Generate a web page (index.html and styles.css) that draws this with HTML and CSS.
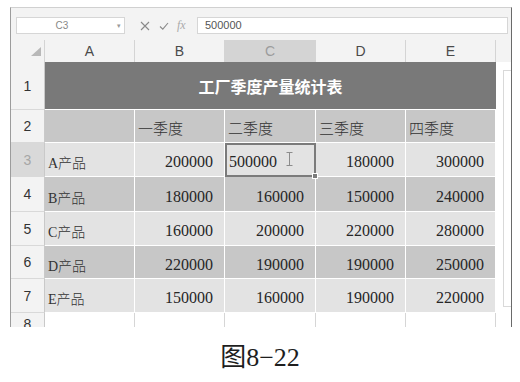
FILE: index.html
```html
<!DOCTYPE html>
<html lang="zh">
<head>
<meta charset="utf-8">
<link rel="stylesheet" href="styles.css">
</head>
<body>
<div class="window">
  <div class="fbar">
    <div class="namebox"><span class="ref">C3</span><span class="dd">▾</span></div>
    <div class="icons">
      <svg class="ico" width="12" height="12" viewBox="0 0 12 12"><path d="M2 2L10 10M10 2L2 10" stroke="#8a8a8a" stroke-width="1.1" fill="none"/></svg>
      <svg class="ico" width="12" height="12" viewBox="0 0 12 12"><path d="M2 6.5L4.8 9.2L10 3" stroke="#8a8a8a" stroke-width="1.1" fill="none"/></svg>
      <span class="fx">fx</span>
    </div>
    <div class="finput">500000</div>
  </div>
  <div class="sheet">
    <div class="corner"><svg width="10" height="9" viewBox="0 0 10 9"><path d="M10 0V9H0Z" fill="#b8b8b8"/></svg></div>
    <div class="ch">A</div>
    <div class="ch">B</div>
    <div class="ch sel">C</div>
    <div class="ch">D</div>
    <div class="ch">E</div>
    <div class="ch end"></div>

    <div class="scroll"><div class="track"></div></div>

    <div class="rh">1</div>
    <div class="title">工厂季度产量统计表</div>

    <div class="rh">2</div>
    <div class="c l dk"></div>
    <div class="c l q dk">一季度</div>
    <div class="c l q dk">二季度</div>
    <div class="c l q dk">三季度</div>
    <div class="c l q dk">四季度</div>

    <div class="rh sel">3</div>
    <div class="c l lt">A产品</div>
    <div class="c n lt">200000</div>
    <div class="c lt active">500000<svg class="ibeam" width="7" height="14" viewBox="0 0 7 14"><path d="M0.5 0.5H6.5M3.5 0.5V13.5M0.5 13.5H6.5" stroke="#8c8c8c" stroke-width="1" fill="none"/></svg></div>
    <div class="c n lt">180000</div>
    <div class="c n lt">300000</div>

    <div class="rh">4</div>
    <div class="c l dk">B产品</div>
    <div class="c n dk">180000</div>
    <div class="c n dk">160000</div>
    <div class="c n dk">150000</div>
    <div class="c n dk">240000</div>

    <div class="rh">5</div>
    <div class="c l lt">C产品</div>
    <div class="c n lt">160000</div>
    <div class="c n lt">200000</div>
    <div class="c n lt">220000</div>
    <div class="c n lt">280000</div>

    <div class="rh">6</div>
    <div class="c l dk">D产品</div>
    <div class="c n dk">220000</div>
    <div class="c n dk">190000</div>
    <div class="c n dk">190000</div>
    <div class="c n dk">250000</div>

    <div class="rh">7</div>
    <div class="c l lt">E产品</div>
    <div class="c n lt">150000</div>
    <div class="c n lt">160000</div>
    <div class="c n lt">190000</div>
    <div class="c n lt">220000</div>

    <div class="rh last">8</div>
    <div class="e"></div>
    <div class="e"></div>
    <div class="e"></div>
    <div class="e"></div>
    <div class="e"></div>
  </div>
</div>
<div class="caption">图8−22</div>
</body>
</html>
```

FILE: styles.css
```css
body {
  margin: 0;
  background: #fff;
  font-family: "Liberation Sans", "Noto Sans CJK SC", sans-serif;
}

.window {
  margin: 7px 0 0 10px;
  width: 502px;
  height: 320px;
  box-sizing: border-box;
  border-left: 1px solid #9c9c9c;
  border-top: 1px solid #d0d0d0;
  border-right: 1px solid #6a6a6a;
  background: #f3f3f3;
  overflow: hidden;
}

.fbar {
  height: 32px;
  box-sizing: border-box;
  padding-top: 9px;
  display: flex;
  align-items: flex-start;
}

.namebox {
  margin-left: 5px;
  width: 109px;
  height: 17px;
  box-sizing: border-box;
  border: 1px solid #d6d6d6;
  background: #fff;
  display: flex;
  align-items: center;
}

.ref {
  flex: 1;
  text-align: center;
  padding-right: 8px;
  font-size: 10px;
  color: #888;
}

.dd {
  width: 8px;
  margin-right: 1px;
  font-size: 7px;
  color: #9a9a9a;
  text-align: center;
}

.icons {
  width: 72px;
  height: 17px;
  box-sizing: border-box;
  padding-left: 14px;
  display: flex;
  align-items: center;
  gap: 7px;
}

.ico {
  display: block;
}

.fx {
  width: 12px;
  font-family: "Liberation Serif", serif;
  font-style: italic;
  font-size: 12px;
  color: #aaa;
}

.finput {
  width: 311px;
  height: 17px;
  box-sizing: border-box;
  border: 1px solid #d6d6d6;
  background: #fff;
  padding-left: 7px;
  font-size: 11px;
  line-height: 15px;
  color: #555;
}

.sheet {
  display: grid;
  grid-template-columns: 34px 90px 90px 91px 90px 90px 15px;
  grid-template-rows: 22px 48px 33px 34px 35px 34px 33px 34px 20px;
}

.corner {
  background: #f3f3f3;
  border-right: 1px solid #d4d4d4;
  display: flex;
  align-items: flex-end;
  justify-content: flex-end;
  padding: 0 3px 6px 0;
}

.ch {
  box-sizing: border-box;
  background: #f3f3f3;
  border-right: 1px solid #d4d4d4;
  display: flex;
  align-items: center;
  justify-content: center;
  font-size: 14px;
  color: #4a4a4a;
}

.ch.sel {
  background: #d4d4d4;
  color: #9c9c9c;
}

.ch.end {
  border-right: none;
}

.scroll {
  grid-column: 7;
  grid-row: 2 / 10;
  background: #fff;
}

.track {
  margin: 8px 0 0 7px;
  height: 235px;
  border: 1px solid #d9d9d9;
  border-right: none;
}

.rh {
  box-sizing: border-box;
  background: #f3f3f3;
  border-right: 1px solid #c9c9c9;
  border-bottom: 1px solid #d9d9d9;
  display: flex;
  align-items: center;
  justify-content: center;
  font-size: 14px;
  color: #333;
}

.rh.sel {
  background: #d9d9d9;
  color: #a6a6a6;
}

.rh.last {
  align-items: flex-start;
  padding-top: 3px;
}

.title {
  grid-column: span 5;
  box-sizing: border-box;
  background: #797979;
  border-bottom: 1px solid #fff;
  display: flex;
  align-items: center;
  justify-content: center;
  font-family: "Noto Sans CJK SC", sans-serif;
  font-weight: bold;
  font-size: 16px;
  color: #fff;
}

.c {
  box-sizing: border-box;
  border-right: 1px solid #fff;
  border-bottom: 1px solid #fff;
  display: flex;
  align-items: center;
  padding-top: 5px;
  font-family: "Liberation Serif", "Noto Sans CJK SC", serif;
  color: #262626;
}

.n {
  justify-content: flex-end;
  padding-right: 11px;
  font-size: 16px;
}

.l {
  padding-left: 3px;
  font-size: 14px;
  font-weight: 300;
  color: #333;
}

.l.q {
  font-size: 15px;
  padding-top: 3px;
}

.dk {
  background: #c7c7c7;
}

.lt {
  background: #e3e3e3;
}

.active {
  position: relative;
  border: 2px solid #7b7b7b;
  padding-left: 2px;
  padding-top: 3px;
  font-size: 16px;
}

.active::after {
  content: "";
  position: absolute;
  right: -4px;
  bottom: -4px;
  width: 4px;
  height: 4px;
  background: #7b7b7b;
  border: 1px solid #fff;
}

.ibeam {
  position: absolute;
  left: 59px;
  top: 7px;
}

.e {
  background: #fff;
  border-right: 1px solid #d6d6d6;
}

.caption {
  margin-top: 16px;
  text-align: center;
  font-family: "Liberation Serif", "Noto Sans CJK SC", serif;
  font-size: 26px;
  line-height: 30px;
  color: #1e1e1e;
}
```
